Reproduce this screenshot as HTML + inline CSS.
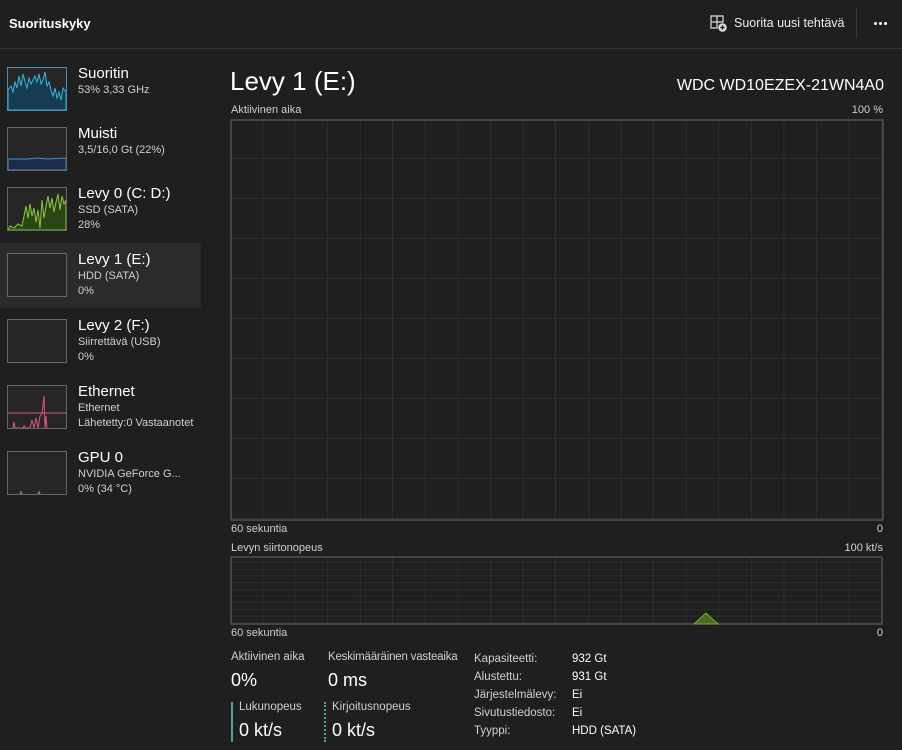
<!DOCTYPE html>
<html><head><meta charset="utf-8"><style>
*{margin:0;padding:0;box-sizing:border-box}
body{width:902px;height:750px;background:#1f1f1f;color:#fff;font-family:"Liberation Sans",sans-serif;position:relative;overflow:hidden}
.a{position:absolute;white-space:nowrap}
.t{font-size:15px}
.s{font-size:11px;color:#d0d0d0}
.th{position:absolute;left:7px;width:60px;height:44px;border:1px solid #777;background:#262626}
</style></head><body>
<div class="a" style="left:9px;top:16px;font-size:13px;font-weight:bold">Suorituskyky</div>
<svg class="a" style="left:710px;top:15px" width="18" height="18" viewBox="0 0 18 18"><path d="M1 1h6v6H1zM7 1h6v6H7zM1 7h6v6H1z" fill="none" stroke="#ddd" stroke-width="1.2"/><circle cx="12.5" cy="12.5" r="4.3" fill="#ddd"/><path d="M12.5 10.3v4.4M10.3 12.5h4.4" stroke="#1f1f1f" stroke-width="1.3"/></svg>
<div class="a" style="left:734px;top:16px;font-size:12.5px;color:#eee">Suorita uusi tehtävä</div>
<div class="a" style="left:856px;top:8px;width:1px;height:30px;background:#3a3a3a"></div>
<div class="a" style="left:874px;top:22px;width:3px;height:3px;background:#fff;border-radius:50%"></div>
<div class="a" style="left:879px;top:22px;width:3px;height:3px;background:#fff;border-radius:50%"></div>
<div class="a" style="left:884px;top:22px;width:3px;height:3px;background:#fff;border-radius:50%"></div>
<div class="a" style="left:0;top:48px;width:902px;height:1px;background:#333"></div>

<div class="a" style="left:0;top:243px;width:201px;height:65px;background:#2b2b2b"></div>

<div class="th" style="top:67px;border-color:#4a8fb0"><svg width="58" height="42"><path d="M0 22L3 18 5 24 7 14 9 20 11 8 13 18 15 6 17 14 19 20 21 10 23 16 25 12 27 8 29 14 31 6 33 16 35 12 37 4 39 18 41 14 43 22 45 28 47 20 49 30 51 24 53 32 55 20 58 24V42H0Z" fill="#173b4f" stroke="#35b5e0" stroke-width="1"/></svg></div>
<div class="a t" style="left:78px;top:65px">Suoritin</div><div class="a s" style="left:78px;top:84px">53%  3,33 GHz</div>

<div class="th" style="top:127px;border-color:#666"><svg width="58" height="42"><path d="M0 31L20 31 30 30 40 31 58 30V42H0Z" fill="#1b2c46" stroke="#4a8bd6" stroke-width="1"/></svg></div>
<div class="a t" style="left:78px;top:125px">Muisti</div><div class="a s" style="left:78px;top:144px">3,5/16,0 Gt (22%)</div>

<div class="th" style="top:187px;border-color:#666"><svg width="58" height="42"><path d="M0 42L2 38 6 40 10 36 14 38 18 18 20 30 22 16 24 28 26 20 28 34 30 22 32 40 34 12 36 30 38 18 40 8 42 20 44 10 46 24 48 14 50 6 52 22 54 8 56 16 58 12V42Z" fill="#2b4514" stroke="#8cc63f" stroke-width="1"/></svg></div>
<div class="a t" style="left:78px;top:185px">Levy 0 (C: D:)</div><div class="a s" style="left:78px;top:204px">SSD (SATA)</div><div class="a s" style="left:78px;top:219px">28%</div>

<div class="th" style="top:253px;border-color:#666"></div>
<div class="a t" style="left:78px;top:251px">Levy 1 (E:)</div><div class="a s" style="left:78px;top:270px">HDD (SATA)</div><div class="a s" style="left:78px;top:285px">0%</div>

<div class="th" style="top:319px;border-color:#666"></div>
<div class="a t" style="left:78px;top:317px">Levy 2 (F:)</div><div class="a s" style="left:78px;top:336px">Siirrettävä (USB)</div><div class="a s" style="left:78px;top:351px">0%</div>

<div class="th" style="top:385px;border-color:#666"><svg width="58" height="42"><path d="M0 27H58" stroke="#d9577f" stroke-width="1"/><path d="M5 42L6 36 7 42 15 42 16 40 18 42 22 42 24 34 26 42 28 32 30 42 32 30 34 28 36 10 37 42 38 30 39 42" fill="none" stroke="#d9577f" stroke-width="1"/></svg></div>
<div class="a t" style="left:78px;top:383px">Ethernet</div><div class="a s" style="left:78px;top:402px">Ethernet</div><div class="a s" style="left:78px;top:417px">Lähetetty:0 Vastaanotet</div>

<div class="th" style="top:451px;border-color:#666"><svg width="58" height="42"><path d="M12 42L13 40 14 42M30 42L31 40 32 42" stroke="#a05cc0" stroke-width="1.5" fill="none"/></svg></div>
<div class="a t" style="left:78px;top:449px">GPU 0</div><div class="a s" style="left:78px;top:468px">NVIDIA GeForce G...</div><div class="a s" style="left:78px;top:483px">0%  (34 °C)</div>

<div class="a" style="left:230px;top:66px;font-size:26px">Levy 1 (E:)</div>
<div class="a" style="right:18px;top:77px;font-size:16px">WDC WD10EZEX-21WN4A0</div>
<div class="a s" style="left:231px;top:104px;font-size:11px">Aktiivinen aika</div>
<div class="a s" style="right:19px;top:104px;font-size:11px">100 %</div>
<svg class="a" style="left:230px;top:119px" width="654" height="402">
<defs><pattern id="g" width="32.6" height="40" patternUnits="userSpaceOnUse"><path d="M32.6 0V40M0 40H32.6" fill="none" stroke="#3a3a3a" stroke-width="1"/></pattern></defs>
<rect x="1" y="1" width="652" height="400" fill="url(#g)" stroke="#6a6a6a"/>
</svg>
<div class="a s" style="left:231px;top:523px;font-size:11px">60 sekuntia</div>
<div class="a s" style="right:19px;top:523px;font-size:11px">0</div>
<div class="a s" style="left:231px;top:542px;font-size:11px">Levyn siirtonopeus</div>
<div class="a s" style="right:19px;top:542px;font-size:11px">100 kt/s</div>
<svg class="a" style="left:230px;top:556px" width="654" height="69">
<defs><pattern id="h" width="32.6" height="6.7" patternUnits="userSpaceOnUse"><path d="M32.6 0V6.7M0 6.7H32.6" fill="none" stroke="#3a3a3a" stroke-width="1"/></pattern></defs>
<rect x="1" y="1" width="651" height="67" fill="url(#h)" stroke="#6a6a6a"/>
<path d="M464 68L476 57 488 68Z" fill="#4d6b1e" stroke="#7ea83a"/>
</svg>
<div class="a s" style="left:231px;top:627px;font-size:11px">60 sekuntia</div>
<div class="a s" style="right:19px;top:627px;font-size:11px">0</div>

<div class="a s" style="left:231px;top:651px;font-size:11.5px">Aktiivinen aika</div>
<div class="a" style="left:231px;top:670px;font-size:18px">0%</div>
<div class="a s" style="left:328px;top:651px;font-size:11.5px;letter-spacing:-0.2px">Keskimääräinen vasteaika</div>
<div class="a" style="left:328px;top:670px;font-size:18px">0 ms</div>
<div class="a" style="left:231px;top:702px;width:2px;height:40px;background:#4aa59a"></div>
<div class="a s" style="left:239px;top:701px;font-size:11.5px">Lukunopeus</div>
<div class="a" style="left:239px;top:720px;font-size:18px">0 kt/s</div>
<div class="a" style="left:324px;top:702px;width:0;height:40px;border-left:2px dotted #4aa59a"></div>
<div class="a s" style="left:332px;top:701px;font-size:11.5px">Kirjoitusnopeus</div>
<div class="a" style="left:332px;top:720px;font-size:18px">0 kt/s</div>

<div class="a s" style="left:474px;top:650px;font-size:11.5px;line-height:18px">Kapasiteetti:<br>Alustettu:<br>Järjestelmälevy:<br>Sivutustiedosto:<br>Tyyppi:</div>
<div class="a" style="left:572px;top:650px;font-size:11.5px;line-height:18px;color:#fff">932 Gt<br>931 Gt<br>Ei<br>Ei<br>HDD (SATA)</div>
</body></html>
